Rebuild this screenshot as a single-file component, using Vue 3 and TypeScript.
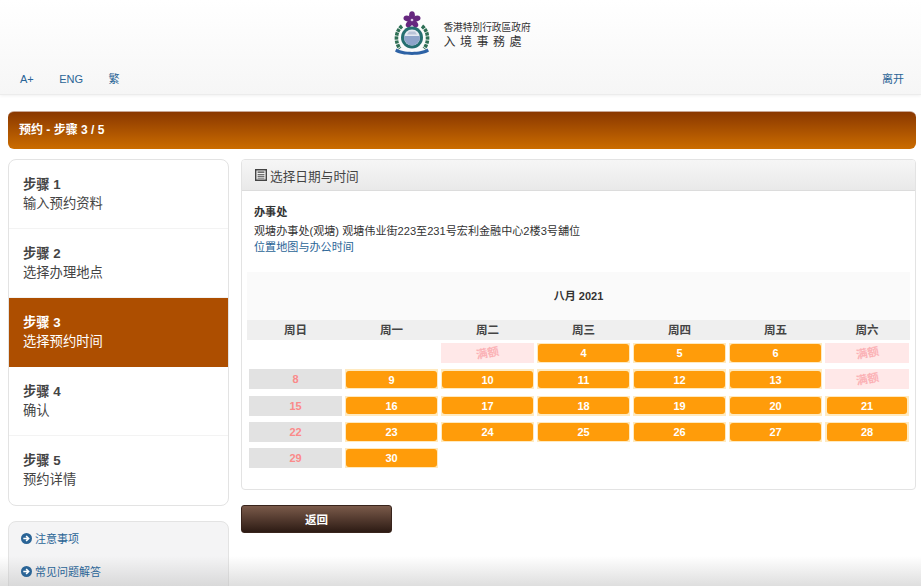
<script setup lang="ts">
const steps = [
  { n: '步骤 1', t: '输入预约资料' },
  { n: '步骤 2', t: '选择办理地点' },
  { n: '步骤 3', t: '选择预约时间', active: true },
  { n: '步骤 4', t: '确认' },
  { n: '步骤 5', t: '预约详情' },
]
const weekdays = ['周日', '周一', '周二', '周三', '周四', '周五', '周六']
type Cell = { k: 'e' | 'full' | 'off' | 'open'; v?: number }
const cells: Cell[] = [
  { k: 'e' }, { k: 'e' }, { k: 'full' }, { k: 'open', v: 4 }, { k: 'open', v: 5 }, { k: 'open', v: 6 }, { k: 'full' },
]
for (let d = 8; d <= 30; d++) {
  if (d === 14) cells.push({ k: 'full' })
  else if ((d - 8) % 7 === 0) cells.push({ k: 'off', v: d })
  else cells.push({ k: 'open', v: d })
}
const leaves = [0, 72, 144, 216, 288]
</script>

<template>
  <div class="page">
    <header class="top">
      <div class="logo">
        <svg class="emblem" viewBox="0 0 36 44" width="36" height="44">
          <g fill="#66277f">
            <ellipse v-for="a in leaves" :key="a" cx="18" cy="4.200" rx="2.900" ry="4" :transform="`rotate(${a} 18 9)`" />
          </g>
          <circle cx="18" cy="9" r="1.300" fill="#d9c8e4" />
          <path d="M8 15C1.500 20 .5 31 6 37.500M28 15C34.500 20 35.500 31 30 37.500" fill="none" stroke="#2e6f55" stroke-width="3.600" stroke-dasharray="3.200 .8" />
          <circle cx="18" cy="26.500" r="11" fill="#256f70" />
          <circle cx="18" cy="26.500" r="8" fill="#e4e9f1" />
          <path d="M10.300 25h15.400l.3 2c-.6 4-4 7.500-8 7.500s-7.400-3.500-8-7.500z" fill="#8ea4c9" />
          <path d="M13 23.500l2-3h6l2 3z" fill="#b9c4d8" />
          <path d="M2.500 37.500c6 4.500 25 4.500 31 0l1.500 3c-6.500 4.500-27.500 4.500-34 0z" fill="#2d62a5" />
        </svg>
        <div class="logo-text">
          <div class="logo-a">香港特別行政區政府</div>
          <div class="logo-b">入境事務處</div>
        </div>
      </div>
      <nav class="nav">
        <div class="nav-left">
          <a>A+</a><a>ENG</a><a>繁</a>
        </div>
        <a>离开</a>
      </nav>
    </header>

    <div class="banner">预约 - 步骤 3 / 5</div>

    <div class="content">
      <aside class="side">
        <ul class="steps">
          <li v-for="s in steps" :key="s.n" :class="{ active: s.active }">
            <b>{{ s.n }}</b>
            <span>{{ s.t }}</span>
          </li>
        </ul>
        <div class="help">
          <a>
            <svg viewBox="0 0 12 12" width="11" height="11"><circle cx="6" cy="6" r="6" fill="#2a6496" /><path d="M2.500 6h5.500M5.600 3.300 8.300 6 5.600 8.700" fill="none" stroke="#fff" stroke-width="1.800" /></svg>
            注意事项
          </a>
          <a>
            <svg viewBox="0 0 12 12" width="11" height="11"><circle cx="6" cy="6" r="6" fill="#2a6496" /><path d="M2.500 6h5.500M5.600 3.300 8.300 6 5.600 8.700" fill="none" stroke="#fff" stroke-width="1.800" /></svg>
            常见问题解答
          </a>
        </div>
      </aside>

      <main class="main">
        <section class="panel">
          <h2 class="panel-head">
            <svg viewBox="0 0 12 12" width="12" height="12"><path d="M.7.7h10.600v10.600H.7z" fill="none" stroke="#444" stroke-width="1.400" /><path d="M2.600 2.500h6.800v1.300H2.600zM2.600 4.900h6.800v.9H2.600zM2.600 6.800h6.800v.9H2.600zM2.600 8.700h6.800v.9H2.600z" fill="#444" /></svg>
            选择日期与时间
          </h2>
          <div class="office">
            <b>办事处</b>
            <p>观塘办事处(观塘) 观塘伟业街223至231号宏利金融中心2楼3号舖位</p>
            <a>位置地图与办公时间</a>
          </div>
          <div class="cal">
            <div class="month">八月 2021</div>
            <div class="grid heads">
              <div v-for="w in weekdays" :key="w" class="head">{{ w }}</div>
            </div>
            <div class="grid days">
              <div v-for="(c, i) in cells" :key="i" class="cell" :class="c.k">
                <span v-if="c.k === 'full'" class="stamp">满额</span>
                <span v-else-if="c.k === 'open'" class="pill">{{ c.v }}</span>
                <template v-else-if="c.v">{{ c.v }}</template>
              </div>
            </div>
          </div>
        </section>
        <button class="back">返回</button>
      </main>
    </div>
    <div class="fade"></div>
  </div>
</template>

<style>
html, body { margin: 0; height: 100%; overflow: hidden; background: #fff; }
</style>

<style scoped>
.page {
  position: relative;
  height: 586px;
  overflow: hidden;
  font-family: "Liberation Sans", "Noto Sans CJK SC", sans-serif;
  font-size: 11px;
  color: #333;
}
a { color: #2a6496; }
.top {
  height: 95px;
  box-sizing: border-box;
  background: linear-gradient(#fff, #f6f6f6);
  border-bottom: 1px solid #ececec;
  box-shadow: 0 1px 3px rgba(0,0,0,.06);
}
.logo { display: flex; justify-content: center; align-items: flex-start; gap: 13px; height: 62px; padding-left: 4px; }
.emblem { margin-top: 11px; }
.logo-text { color: #333; margin-top: 21px; }
.logo-a { font-size: 9.700px; line-height: 14px; }
.logo-b { font-size: 12px; line-height: 15px; letter-spacing: 4.500px; }
.nav { display: flex; justify-content: space-between; padding: 10px 17px 0 20px; line-height: 14px; }
.nav-left { display: flex; gap: 25.500px; }
.banner {
  margin: 16px 5px 0 8px;
  height: 38px;
  box-sizing: border-box;
  padding: 11px 11px;
  line-height: 15px;
  border-radius: 6px;
  border-top: 1px solid #c9a796;
  background: linear-gradient(#8a3800, #cb6c00);
  color: #fff;
  font-size: 12px;
  font-weight: 700;
}
.content { display: flex; gap: 12px; margin: 10px 5px 0 8px; align-items: flex-start; }
.side { width: 221px; flex: none; }
.steps {
  list-style: none;
  margin: 0;
  padding: 0;
  border: 1px solid #e3e3e3;
  border-radius: 8px;
  height: 347px;
  box-sizing: border-box;
  overflow: hidden;
  background: #fff;
}
.steps li {
  height: 69px;
  box-sizing: border-box;
  padding: 15px 14px;
  border-bottom: 1px solid #f3f3f3;
  font-size: 13.300px;
  line-height: 19px;
  color: #444;
}
.steps li:last-child { border-bottom: 0; }
.steps b, .steps span { display: block; }
.steps li.active { background: #ad4e00; color: #fff; border-bottom: 0; }
.help {
  margin-top: 15px;
  height: 90px;
  box-sizing: border-box;
  border: 1px solid #e3e3e3;
  border-radius: 8px;
  background: #f4f4f5;
  padding: 8px 12px;
}
.help a { position: relative; z-index: 1; display: flex; align-items: center; gap: 3px; height: 16px; margin-bottom: 17px; font-size: 11px; }
.main { flex: 1; min-width: 0; }
.panel {
  border: 1px solid #e3e3e3;
  border-radius: 4px;
  height: 331px;
  box-sizing: border-box;
  overflow: hidden;
}
.panel-head {
  margin: 0;
  height: 31px;
  box-sizing: border-box;
  display: flex;
  align-items: center;
  gap: 3px;
  padding: 0 13px;
  font-size: 12.700px;
  font-weight: 400;
  color: #444;
  background: linear-gradient(#f6f6f6, #e9e9e9);
  border-bottom: 1px solid #dcdcdc;
}
.office { box-sizing: border-box; padding: 13px 12px 0; line-height: 16px; height: 68px; font-size: 11.100px; }
.office b { display: block; margin-bottom: 3px; }
.office p { margin: 0; }
.cal { margin: 13px 5px 0; }
.month { height: 48px; line-height: 48px; text-align: center; background: #fafafa; font-weight: 700; }
.grid { display: grid; grid-template-columns: repeat(6, 93px) 84px; column-gap: 3px; padding-left: 2px; }
.heads { background: #efefef; height: 20px; margin-bottom: 3px; }
.head { text-align: center; line-height: 20px; font-weight: 700; font-size: 11.500px; color: #444; }
.days { row-gap: 6.300px; }
.cell { height: 20px; box-sizing: border-box; text-align: center; line-height: 20px; font-weight: 700; }
.open { background: #ffeac0; padding: 1.250px; }
.open:nth-child(7n) .pill { margin: 0 1px; }
.pill { display: block; height: 17.500px; line-height: 18.500px; background: #ff9c0a; color: #fff; border-radius: 3px; }
.off { background: #e2e2e2; color: #fb8a8a; }
.full { background: #ffe8e8; overflow: hidden; }
.stamp { display: inline-block; transform: rotate(-11deg); color: #fbb2b6; font-size: 11.500px; }
.back {
  display: block;
  margin-top: 15px;
  width: 151px;
  height: 28px;
  border: 1px solid #38241c;
  border-radius: 3px;
  background: linear-gradient(#7a5a4a, #2d1b14);
  color: #fff;
  font: 700 11.500px "Liberation Sans", "Noto Sans CJK SC", sans-serif;
}
.fade {
  position: absolute;
  left: 0;
  right: 0;
  bottom: 0;
  height: 30px;
  background: linear-gradient(rgba(190,190,190,0), rgba(190,190,190,.5));
  pointer-events: none;
}
</style>
